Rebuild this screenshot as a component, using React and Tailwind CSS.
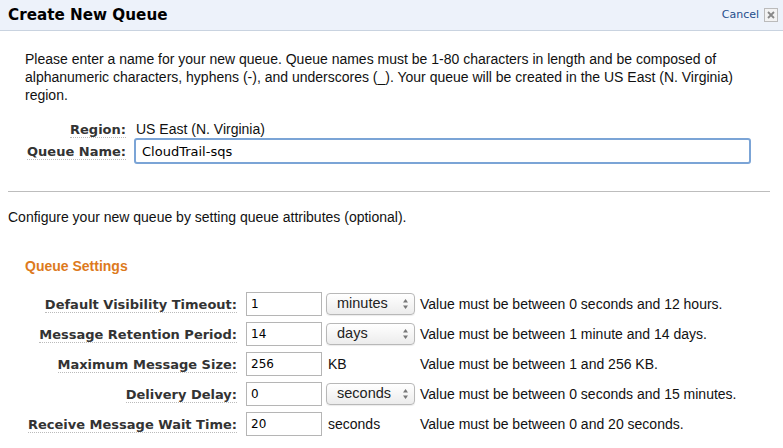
import { useState } from 'react';

const rows = [
  { label: 'Default Visibility Timeout:', value: '1', unit: 'minutes', select: true, hint: 'Value must be between 0 seconds and 12 hours.' },
  { label: 'Message Retention Period:', value: '14', unit: 'days', select: true, hint: 'Value must be between 1 minute and 14 days.' },
  { label: 'Maximum Message Size:', value: '256', unit: 'KB', select: false, hint: 'Value must be between 1 and 256 KB.' },
  { label: 'Delivery Delay:', value: '0', unit: 'seconds', select: true, hint: 'Value must be between 0 seconds and 15 minutes.' },
  { label: 'Receive Message Wait Time:', value: '20', unit: 'seconds', select: false, hint: 'Value must be between 0 and 20 seconds.' },
];

function Label({ children }) {
  return (
    <span className="font-['DejaVu_Sans',sans-serif] font-bold text-[13px] text-[#333] border-b border-dotted border-[#bbb] leading-[15px]">
      {children}
    </span>
  );
}

function Arrows() {
  return (
    <svg width="7" height="12" viewBox="0 0 7 12" className="shrink-0">
      <path d="M3.5 1 L6 4.5 L1 4.5 Z" fill="#777" />
      <path d="M3.5 11 L6 7.5 L1 7.5 Z" fill="#777" />
    </svg>
  );
}

export default function App() {
  const [name, setName] = useState('CloudTrail-sqs');

  return (
    <div className="w-[783px] h-[448px] bg-white overflow-hidden font-['Liberation_Sans',Arial,sans-serif] text-[14px] text-[#111]">
      <div className="h-[31px] bg-[#edf2fa] border-b border-[#c9d3e0] flex items-center justify-between pl-[8px] pr-[5px]">
        <h1 className="font-['DejaVu_Sans',sans-serif] font-bold text-[15.2px] text-black">Create New Queue</h1>
        <div className="flex items-center gap-[5px]">
          <span className="font-['DejaVu_Sans',sans-serif] text-[11px] text-[#1f4e8c]">Cancel</span>
          <span className="w-[14px] h-[14px] border border-[#bbb] bg-[#f3f3f3] flex items-center justify-center">
            <svg width="8" height="8" viewBox="0 0 8 8">
              <path d="M1 1 L7 7 M7 1 L1 7" stroke="#888" strokeWidth="1.8" />
            </svg>
          </span>
        </div>
      </div>

      <p className="pl-[25px] pr-[20px] pt-[19px] leading-[18px] text-[14px]">
        Please enter a name for your new queue. Queue names must be 1-80 characters in length and be composed of alphanumeric characters, hyphens (-), and underscores (_). Your queue will be created in the US East (N. Virginia) region.
      </p>

      <div className="mt-[17px] grid grid-cols-[126px_1fr] gap-x-[8px] gap-y-[1px] items-center pr-[32px] leading-[16px]">
        <div className="text-right"><Label>Region:</Label></div>
        <div className="pl-[2px]">US East (N. Virginia)</div>
        <div className="text-right"><Label>Queue Name:</Label></div>
        <input
          value={name}
          onChange={(e) => setName(e.target.value)}
          className="h-[26px] border-2 border-[#7ba4d6] rounded-[3px] px-[6px] text-[13px] font-['DejaVu_Sans',sans-serif] text-black outline-none"
        />
      </div>

      <hr className="mt-[27px] ml-[8px] mr-[13px] border-t border-[#bdbdbd]" />

      <p className="pl-[8px] pt-[15px] text-[14px]">Configure your new queue by setting queue attributes (optional).</p>

      <h2 className="pl-[25px] pt-[28px] font-bold text-[14px] text-[#dd7a1d]">Queue Settings</h2>

      <div className="mt-[15px] flex flex-col gap-[6px]">
        {rows.map((r) => (
          <div key={r.label} className="flex items-center h-[24px]">
            <div className="w-[237px] text-right"><Label>{r.label}</Label></div>
            <input
              defaultValue={r.value}
              className="ml-[9px] w-[76px] h-[24px] border border-[#b5b5b5] px-[4px] text-[12px] font-['DejaVu_Sans',sans-serif] text-black outline-none"
            />
            {r.select ? (
              <div className="ml-[4px] w-[89px] h-[22px] border border-[#b8b8b8] rounded-[4px] bg-gradient-to-b from-white to-[#ececec] flex items-center justify-between pl-[10px] pr-[5px] shadow-[0_1px_1px_rgba(0,0,0,0.08)]">
                <span className="text-[14.5px] text-[#222]">{r.unit}</span>
                <Arrows />
              </div>
            ) : (
              <div className="ml-[4px] w-[89px] pl-[2px] text-[14px]">{r.unit}</div>
            )}
            <span className="ml-[5px] text-[14px]">{r.hint}</span>
          </div>
        ))}
      </div>
    </div>
  );
}
